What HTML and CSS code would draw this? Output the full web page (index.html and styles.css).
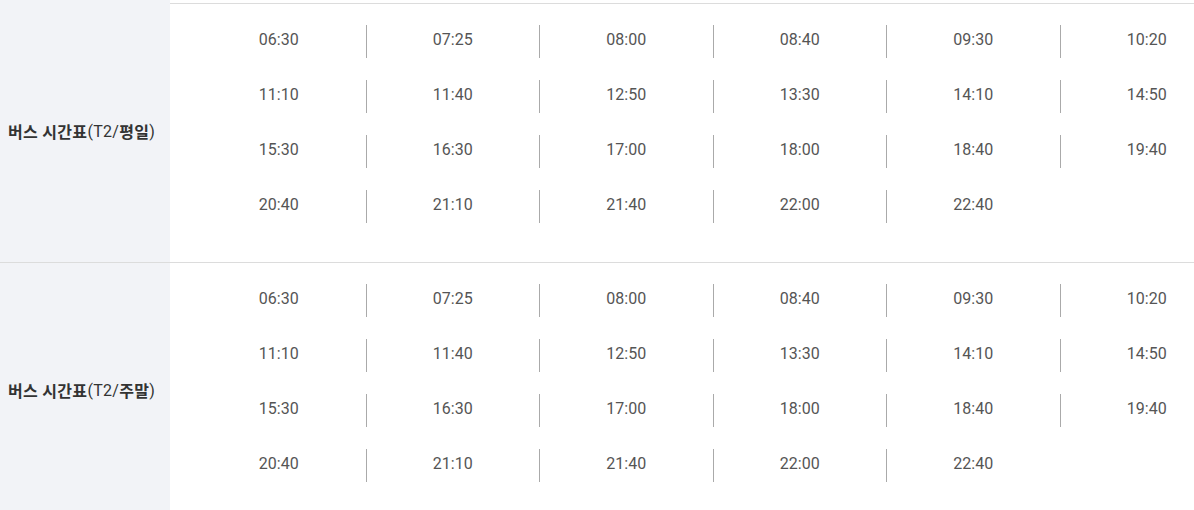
FILE: index.html
```html
<!DOCTYPE html>
<html lang="ko">
<head>
<meta charset="utf-8">
<title>버스 시간표</title>
<link rel="stylesheet" href="styles.css">
</head>
<body>
<div class="table">
  <div class="row row-prev">
    <div class="head"></div>
    <div class="body"></div>
  </div>
  <div class="row">
    <div class="head"><span class="b">버스 시간표</span>(T2/<span class="b">평일</span>)</div>
    <div class="body">
      <div class="times">
        <div class="t">06:30</div><div class="t">07:25</div><div class="t">08:00</div><div class="t">08:40</div><div class="t">09:30</div><div class="t">10:20</div>
        <div class="t">11:10</div><div class="t">11:40</div><div class="t">12:50</div><div class="t">13:30</div><div class="t">14:10</div><div class="t">14:50</div>
        <div class="t">15:30</div><div class="t">16:30</div><div class="t">17:00</div><div class="t">18:00</div><div class="t">18:40</div><div class="t">19:40</div>
        <div class="t">20:40</div><div class="t">21:10</div><div class="t">21:40</div><div class="t">22:00</div><div class="t">22:40</div>
      </div>
    </div>
  </div>
  <div class="row">
    <div class="head"><span class="b">버스 시간표</span>(T2/<span class="b">주말</span>)</div>
    <div class="body">
      <div class="times">
        <div class="t">06:30</div><div class="t">07:25</div><div class="t">08:00</div><div class="t">08:40</div><div class="t">09:30</div><div class="t">10:20</div>
        <div class="t">11:10</div><div class="t">11:40</div><div class="t">12:50</div><div class="t">13:30</div><div class="t">14:10</div><div class="t">14:50</div>
        <div class="t">15:30</div><div class="t">16:30</div><div class="t">17:00</div><div class="t">18:00</div><div class="t">18:40</div><div class="t">19:40</div>
        <div class="t">20:40</div><div class="t">21:10</div><div class="t">21:40</div><div class="t">22:00</div><div class="t">22:40</div>
      </div>
    </div>
  </div>
</div>
</body>
</html>
```
FILE: styles.css
```css
html, body {
  margin: 0;
  padding: 0;
  background: #fff;
  overflow: hidden;
}
body {
  font-family: Roboto, "Noto Sans CJK KR", sans-serif;
  color: #555;
}
.table {
  width: 1240px;
}
.row {
  display: flex;
  border-top: 1px solid #dcdcdc;
}
.row-prev {
  height: 3px;
  border-top: none;
}
.head {
  flex: 0 0 170px;
  background: #f2f3f7;
  display: flex;
  align-items: center;
  padding: 0 0 4px 8px;
  box-sizing: border-box;
  font-size: 16px;
  letter-spacing: 0.3px;
  color: #333;
  white-space: nowrap;
}
.head .b {
  font-weight: 700;
}
.body {
  flex: 1;
  padding: 21px 0 39px 22px;
}
.row-prev .body {
  padding: 0;
}
.times {
  display: grid;
  grid-template-columns: repeat(6, 173.5px);
  row-gap: 22px;
}
.t {
  height: 33px;
  line-height: 29px;
  text-align: center;
  font-size: 16px;
  color: #555;
  border-left: 1px solid #aaa;
  box-sizing: border-box;
}
.t:nth-child(6n+1) {
  border-left: none;
}
```
